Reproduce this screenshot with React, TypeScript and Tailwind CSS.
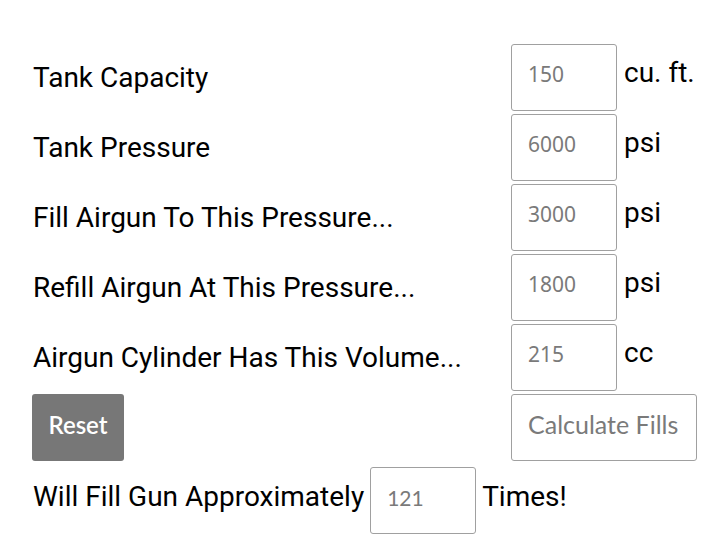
import { useState } from 'react';

const rows = [
    { label: 'Tank Capacity', value: '150', unit: 'cu. ft.' },
    { label: 'Tank Pressure', value: '6000', unit: 'psi' },
    { label: 'Fill Airgun To This Pressure...', value: '3000', unit: 'psi' },
    { label: 'Refill Airgun At This Pressure...', value: '1800', unit: 'psi' },
    { label: 'Airgun Cylinder Has This Volume...', value: '215', unit: 'cc' },
];

const labelFont = "font-['Roboto',sans-serif] text-[28px] text-black";
const inputCls =
    "w-[106px] h-[67px] border border-[#a0a0a0] rounded-[3px] pl-[16px] pb-[7px] bg-white text-[#7a7a7a] text-[21px] outline-none";

const App = () => {
    const [values, setValues] = useState(rows.map((r) => r.value));
    const [fills] = useState('121');

    return (
        <div className="min-h-[549px] bg-white pt-[44px] pl-[32px]">
            <div className="grid grid-cols-[479px_auto] gap-y-[3px]">
                {rows.map((row, i) => (
                    <div key={row.label} className="contents">
                        <div className={`flex items-center pl-[1px] ${labelFont}`}>{row.label}</div>
                        <div className="flex items-baseline">
                            <input
                                className={`${inputCls} font-['Noto_Sans',sans-serif]`}
                                value={values[i]}
                                onChange={(e) => {
                                    const next = [...values];
                                    next[i] = e.target.value;
                                    setValues(next);
                                }}
                            />
                            <span className={`ml-[7px] ${labelFont}`}>{row.unit}</span>
                        </div>
                    </div>
                ))}

                {/* botoes */}
                <div>
                    <button className="w-[92px] h-[67px] bg-[#777777] rounded-[3px] text-white text-[24px] font-['Lato',sans-serif] font-semibold pb-[6px]">
                        Reset
                    </button>
                </div>
                <div>
                    <button className="w-[186px] h-[67px] border border-[#a0a0a0] rounded-[3px] bg-white text-[#7a7a7a] text-[25px] font-['Lato',sans-serif] text-left pl-[16px] pb-[6px]">
                        Calculate Fills
                    </button>
                </div>
            </div>

            <div className="flex items-baseline mt-[6px] pl-[1px]">
                <span className={labelFont}>Will Fill Gun Approximately</span>
                <input
                    className={`ml-[6px] ${inputCls} font-['Lato',sans-serif]`}
                    value={fills}
                    readOnly
                />
                <span className={`ml-[6px] ${labelFont}`}>Times!</span>
            </div>
        </div>
    );
};

export default App;
